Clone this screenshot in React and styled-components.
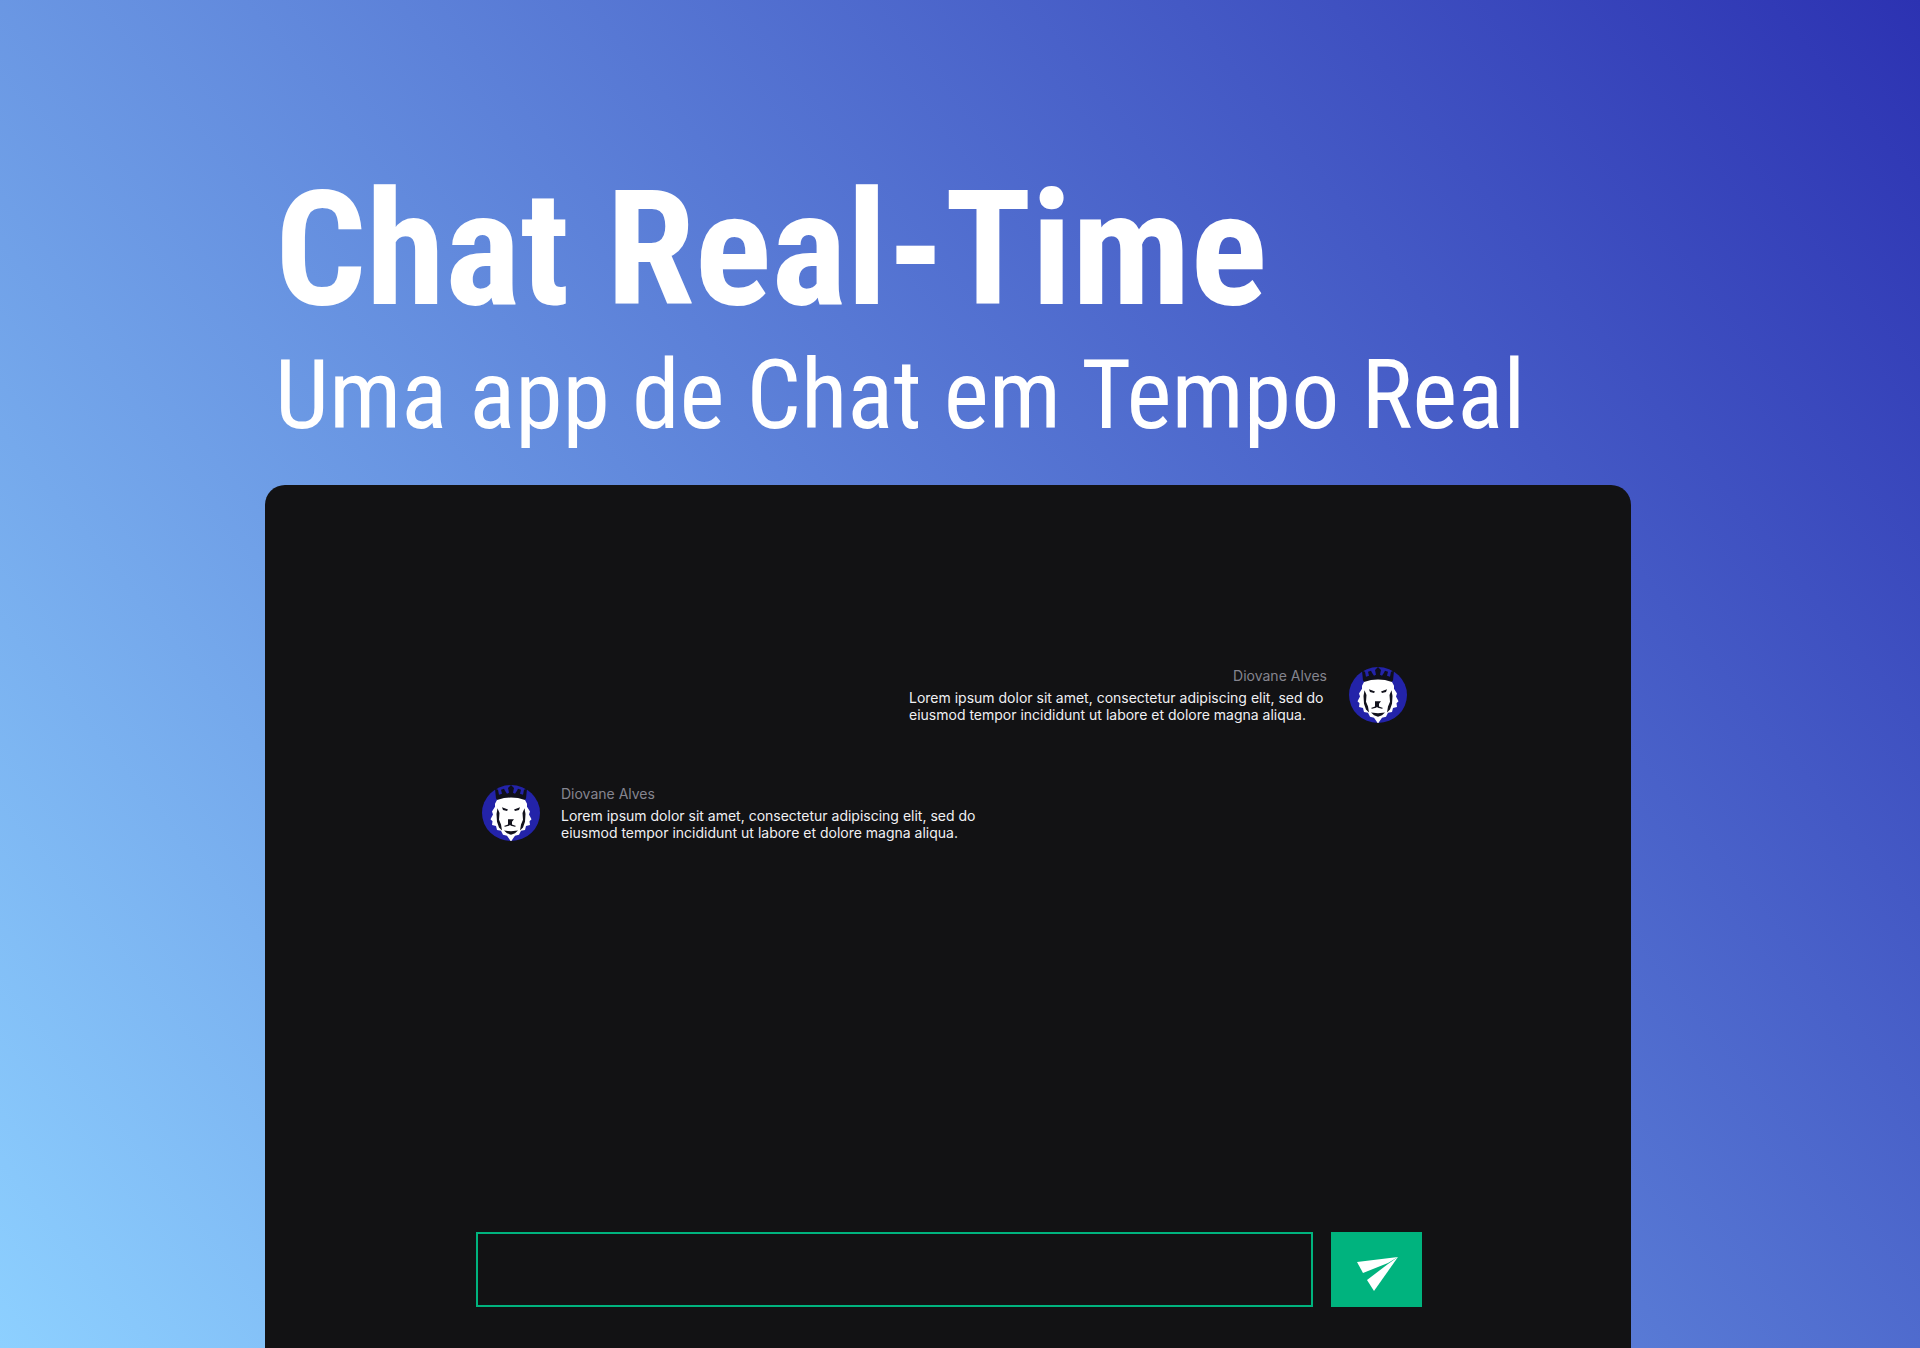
import React from "react";
import styled, { createGlobalStyle } from "styled-components";

const Global = createGlobalStyle`
  html, body { margin: 0; padding: 0; height: 100%; overflow: hidden; }
  body { font-family: "Inter", "Liberation Sans", sans-serif; }
`;

const Page = styled.main`
  width: 1920px;
  height: 1348px;
  overflow: hidden;
  background: linear-gradient(51deg, #8dd0ff 0%, #2c32b2 100%);
  display: flex;
  flex-direction: column;
  padding: 170px 289px 0 265px;
  box-sizing: border-box;
`;

const Hero = styled.header`
  display: flex;
  flex-direction: column;
  padding-left: 10px;
  color: #fff;
  font-family: "Roboto", sans-serif;
  font-stretch: 75%;
`;

const Title = styled.h1`
  margin: 0;
  font-size: 160px;
  line-height: 160px;
  font-weight: 700;
  white-space: nowrap;
`;

const Subtitle = styled.h2`
  margin: 9px 0 0;
  font-size: 96px;
  line-height: 112px;
  font-weight: 400;
  white-space: nowrap;
`;

const Panel = styled.section`
  flex: 1;
  margin-top: 34px;
  background: #121214;
  border-radius: 20px 20px 0 0;
  display: flex;
  flex-direction: column;
  padding: 182px 209px 41px 211px;
`;

const Messages = styled.div`
  flex: 1;
  display: flex;
  flex-direction: column;
  gap: 62px;
`;

const Message = styled.article`
  display: flex;
  flex-direction: ${(p) => (p.$mine ? "row-reverse" : "row")};
  gap: ${(p) => (p.$mine ? "22px" : "21px")};
  height: 56px;
  padding: ${(p) => (p.$mine ? "0 15px 0 0" : "0 0 0 6px")};
`;

const Body = styled.div`
  display: flex;
  flex-direction: column;
  gap: 5px;
  width: 418px;
`;

const Name = styled.span`
  font-size: 14px;
  line-height: 17px;
  color: #85858f;
  text-align: ${(p) => (p.$mine ? "right" : "left")};
`;

const Text = styled.p`
  margin: 0;
  font-size: 14px;
  line-height: 17px;
  color: #f0f0f3;
`;

const AvatarSvg = styled.svg`
  width: 58px;
  height: 56px;
  flex: none;
  display: block;
`;

const Composer = styled.form`
  display: flex;
  gap: 18px;
  height: 75px;
`;

const Input = styled.input`
  flex: 1;
  background: transparent;
  border: 2px solid #00b37e;
  outline: none;
  color: #e1e1e6;
  box-sizing: border-box;
  min-width: 0;
`;

const Send = styled.button`
  width: 91px;
  border: 0;
  background: #00b37e;
  padding: 9px 0 0 3px;
  display: flex;
  align-items: center;
  justify-content: center;
`;

const Avatar = () => (
  <AvatarSvg viewBox="0 0 58 58" preserveAspectRatio="none">
    <circle cx="29" cy="29" r="29" fill="#2323a9" />
    <path d="M13 4l3 1 1 5 3-1-1-4 3-1 1 2 2 3 2-1-1-5 3-3 3 3-1 5 2 1 2-3 1-2 3 1-1 4 3 1 1-5 3-1-1 10-4 4H18l-4-4z" fill="#0f0f1a" />
    <path d="M29 13l-7 .5-7 2-2 4v3l-3 5 1 3-2.500 5 2 2-.5 4 4 1 1 4 4 1 2 4 4 1 4 6 4-6 4-1 2-4 4-1 1-4 4-1-.5-4 2-2-2.500-5 1-3-3-5v-3l-2-4-7-2z" fill="#fff" />
    <path d="M15.500 24l-1 6 .5 8 2 6 3 3-1-6-2-5 .5-7zM42.500 24l1 6-.5 8-2 6-3 3 1-6 2-5-.5-7z" fill="#12121c" />
    <path d="M20 23l6 2.500-1 1.500-4-1zM38 23l-6 2.500 1 1.500 4-1z" fill="#12121c" />
    <path d="M26 35.500h6l-2 2.500v3l4 1.500-1 .7-4-1-1-.7-1 .7-4 1-1-.7 4-1.500v-3z" fill="#12121c" />
    <path d="M22 47l7 1 7-1-3 3-4 1.500-4-1.500z" fill="#12121c" />
  </AvatarSvg>
);

const SendIcon = () => (
  <svg width="42" height="34" viewBox="0 0 42 34">
    <path d="M0 5L41 0 31 6 6 16z" fill="#fff" />
    <path d="M41 0L17 34 10 23 31 7z" fill="#fff" />
  </svg>
);

const lorem = (
  <>
    Lorem ipsum dolor sit amet, consectetur adipiscing elit, sed do
    <br />
    eiusmod tempor incididunt ut labore et dolore magna aliqua.
  </>
);

export default function App() {
  return (
    <Page>
      <Global />
      <Hero>
        <Title>Chat Real-Time</Title>
        <Subtitle>Uma app de Chat em Tempo Real</Subtitle>
      </Hero>
      <Panel>
        <Messages>
          <Message $mine>
            <Avatar />
            <Body>
              <Name $mine>Diovane Alves</Name>
              <Text>{lorem}</Text>
            </Body>
          </Message>
          <Message>
            <Avatar />
            <Body>
              <Name>Diovane Alves</Name>
              <Text>{lorem}</Text>
            </Body>
          </Message>
        </Messages>
        <Composer onSubmit={(e) => e.preventDefault()}>
          <Input aria-label="Mensagem" />
          <Send type="submit" aria-label="Enviar">
            <SendIcon />
          </Send>
        </Composer>
      </Panel>
    </Page>
  );
}
